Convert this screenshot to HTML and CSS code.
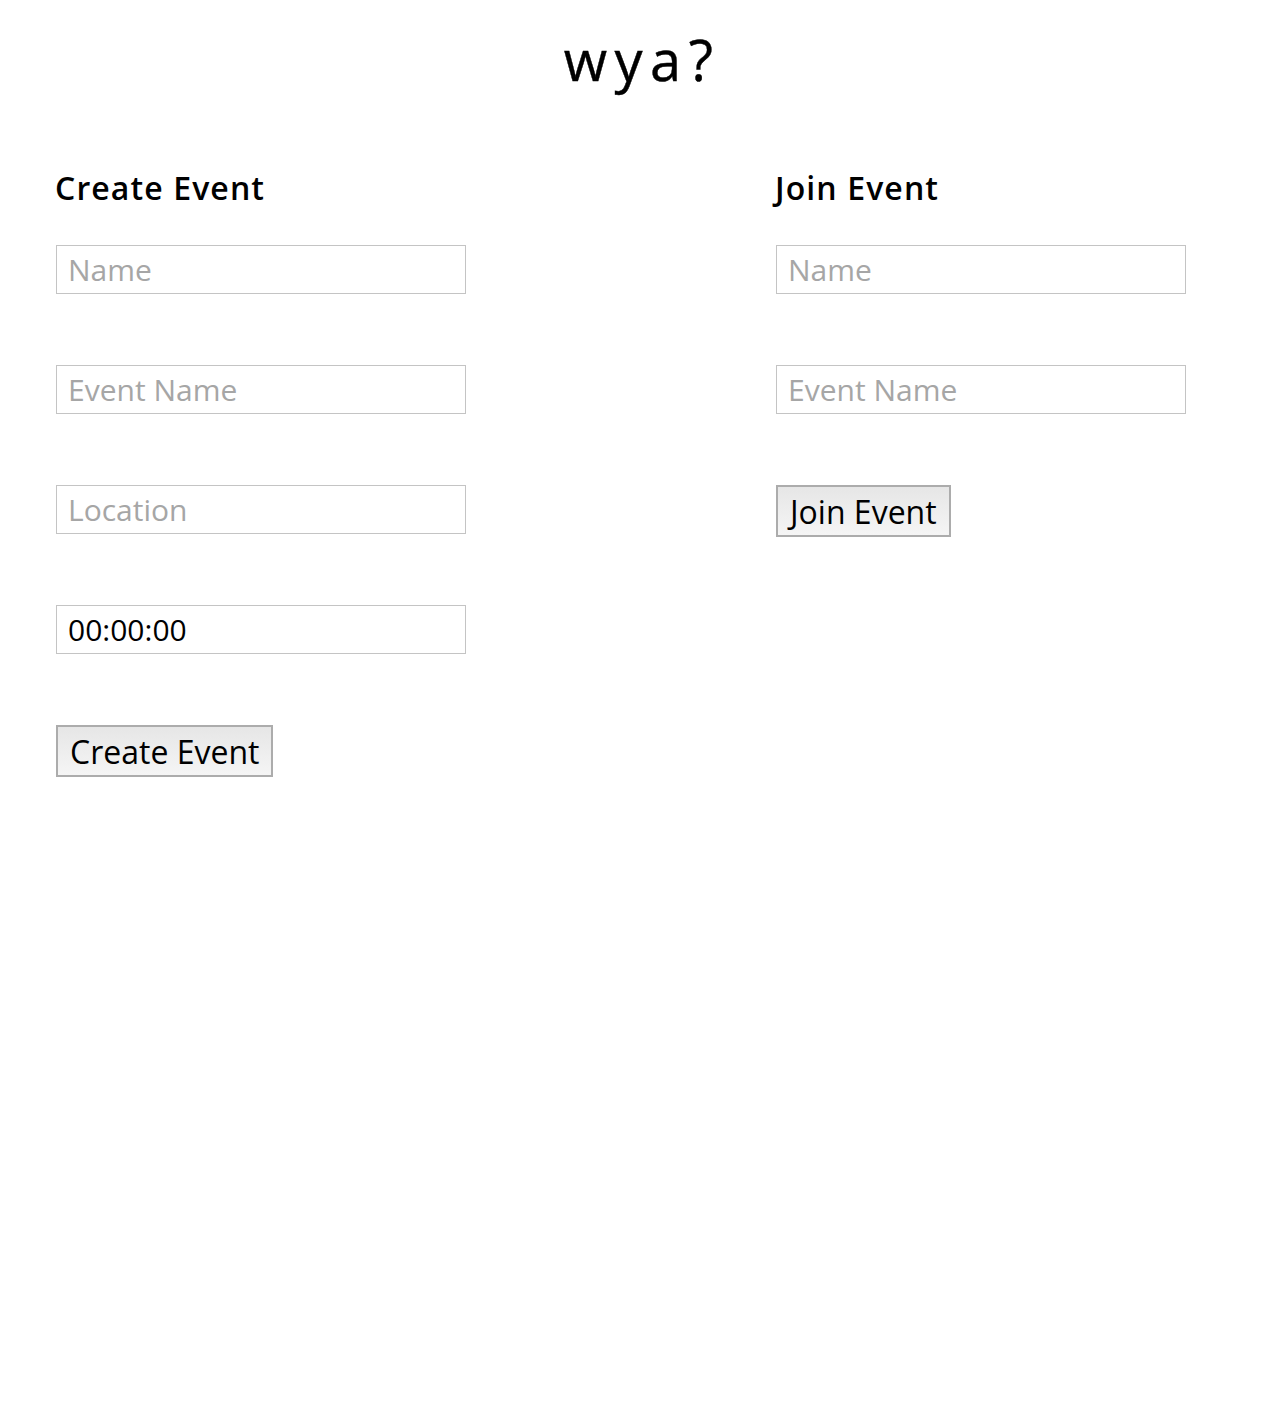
FILE: index.html
```html
<!DOCTYPE html>
<html>
<head>
<meta charset="utf-8">
<link rel="stylesheet" href="styles.css">
</head>
<body>
<h1 class="title">wya?</h1>
<div class="columns">
  <section class="panel">
    <h2 class="panel-title">Create Event</h2>
    <input class="field" type="text" placeholder="Name">
    <input class="field" type="text" placeholder="Event Name">
    <input class="field" type="text" placeholder="Location">
    <input class="field" type="text" value="00:00:00">
    <button class="btn">Create Event</button>
  </section>
  <section class="panel">
    <h2 class="panel-title">Join Event</h2>
    <input class="field" type="text" placeholder="Name">
    <input class="field" type="text" placeholder="Event Name">
    <button class="btn">Join Event</button>
  </section>
</div>
</body>
</html>
```
FILE: styles.css
```css
html, body {
  margin: 0;
  padding: 0;
  background: #fff;
  font-family: "Open Sans", sans-serif;
  color: #000;
}
.title {
  margin: 21px 0 0;
  text-align: center;
  text-indent: 20px;
  font-size: 56px;
  font-weight: 400;
  letter-spacing: 7.5px;
  line-height: 76px;
  -webkit-text-stroke: 0.4px #000;
}
.columns {
  display: grid;
  grid-template-columns: 720px 1fr;
  padding: 0 0 0 56px;
  margin-top: 70px;
}
.panel {
  display: flex;
  flex-direction: column;
  align-items: flex-start;
}
.panel-title {
  margin: 0 0 36px -1px;
  font-size: 32px;
  font-weight: 600;
  letter-spacing: 1.1px;
  line-height: 42px;
}
.field {
  box-sizing: border-box;
  width: 410px;
  height: 49px;
  margin: 0 0 71px;
  padding: 0 11px;
  border: 1px solid #c4c4c4;
  font-family: "Open Sans", sans-serif;
  font-size: 30px;
  color: #000;
  outline: none;
}
.field::placeholder {
  color: #a6a6a6;
}
.btn {
  box-sizing: border-box;
  height: 52px;
  padding: 0 12px;
  border: 2px solid #acacac;
  border-radius: 0;
  background: linear-gradient(#e6e6e6, #f5f5f5);
  font-family: "Open Sans", sans-serif;
  font-size: 32px;
  color: #000;
}
```
